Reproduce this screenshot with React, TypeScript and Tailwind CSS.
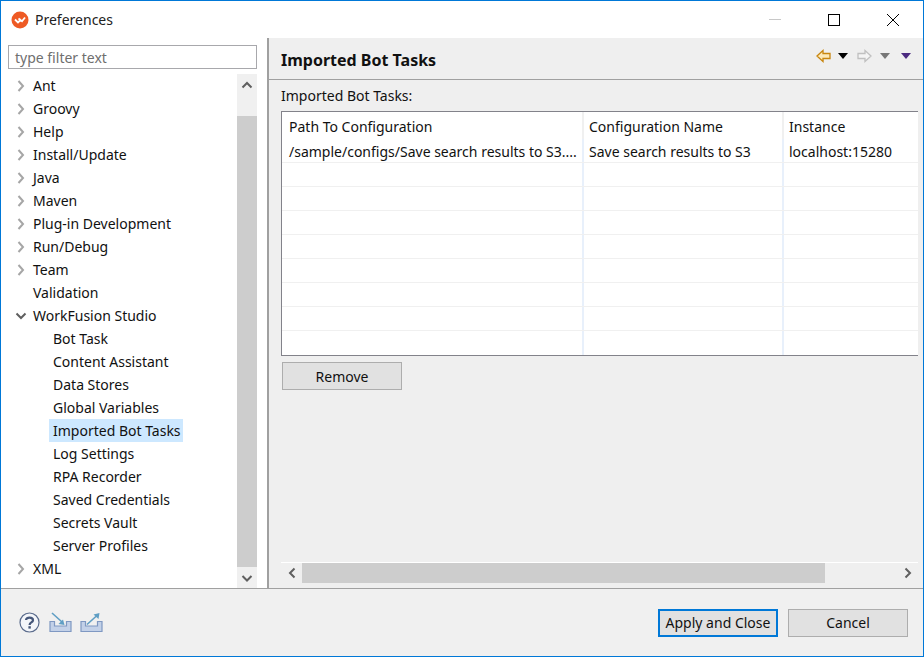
import React from "react";

const font = { fontFamily: '"Noto Sans", "Open Sans", sans-serif' };

function Chevron({ open }: { open?: boolean }) {
  return (
    <svg width="12" height="12" viewBox="0 0 12 12" className="shrink-0">
      <path d={open ? "M1.5 3.5 L6 8 L10.5 3.5" : "M3.5 1 L8 6 L3.5 11"} fill="none" stroke={open ? "#5f5f5f" : "#a6a6a6"} strokeWidth="2" />
    </svg>
  );
}

const top = [
  ["Ant", 1], ["Groovy", 1], ["Help", 1], ["Install/Update", 1], ["Java", 1], ["Maven", 1],
  ["Plug-in Development", 1], ["Run/Debug", 1], ["Team", 1], ["Validation", 0],
] as const;
const kids = ["Bot Task", "Content Assistant", "Data Stores", "Global Variables", "Imported Bot Tasks", "Log Settings", "RPA Recorder", "Saved Credentials", "Secrets Vault", "Server Profiles"];

function Row({ label, arrow, open }: { label: string; arrow?: boolean; open?: boolean }) {
  return (
    <div className="flex h-[23px] items-center pl-[14px]">
      <div className="w-[18px]">{arrow ? <Chevron open={open} /> : null}</div>
      <span className="text-[14px] text-[#111]">{label}</span>
    </div>
  );
}

function ArrowLeft({ color, fill }: { color: string; fill: string }) {
  return (
    <svg width="15" height="14" viewBox="0 0 15 14">
      <path d="M1 7 L7 1.5 V4.5 H14 V9.5 H7 V12.5 Z" fill={fill} stroke={color} strokeWidth="1.3" />
    </svg>
  );
}
function ArrowRight({ color, fill }: { color: string; fill: string }) {
  return (
    <svg width="15" height="14" viewBox="0 0 15 14">
      <path d="M14 7 L8 1.5 V4.5 H1 V9.5 H8 V12.5 Z" fill={fill} stroke={color} strokeWidth="1.3" />
    </svg>
  );
}
function Tri({ color }: { color: string }) {
  return (
    <svg width="10" height="6" viewBox="0 0 10 6"><path d="M0 0 H10 L5 6 Z" fill={color} /></svg>
  );
}

const rowsData = [
  ["/sample/configs/Save search results to S3....", "Save search results to S3", "localhost:15280"],
  ["", "", ""], ["", "", ""], ["", "", ""], ["", "", ""], ["", "", ""], ["", "", ""], ["", "", ""], ["", "", ""],
];

const tray = "M1 9.5 H5.5 V14 H17.5 V9.5 H22 V19.5 H1 Z";

export default function App() {
  return (
    <div style={font} className="flex h-[657px] w-[924px] flex-col border border-[#0078d7] bg-white text-[14px] text-[#111]">
      {/* title bar */}
      <div className="flex h-[37px] shrink-0 items-center pl-[10px]">
        <svg width="18" height="18" viewBox="0 0 18 18">
          <circle cx="9" cy="9" r="8.5" fill="#ee5a24" />
          <path d="M4 8.5 L7 11.5 L9.5 9 L11 10.2 L14 6.5 M7.5 7.5 L9.5 9" fill="none" stroke="#fff" strokeWidth="1.8" />
        </svg>
        <span className="ml-[6px] text-[14px] text-[#222]">Preferences</span>
        <div className="ml-auto flex items-center pr-px">
          <div className="flex w-[58px] justify-center"><div className="h-px w-[12px] bg-[#c8c8c8]" /></div>
          <div className="flex w-[60px] justify-center"><div className="h-[12px] w-[12px] border border-black" /></div>
          <div className="flex w-[58px] justify-center">
            <svg width="14" height="14" viewBox="0 0 14 14"><path d="M1 1 L13 13 M13 1 L1 13" stroke="#000" strokeWidth="1" /></svg>
          </div>
        </div>
      </div>

      {/* body */}
      <div className="flex min-h-0 flex-1">
        {/* left */}
        <div className="flex w-[266px] shrink-0 flex-col pl-[7px] pr-[10px] pt-[7px]">
          <div className="flex h-[24px] shrink-0 items-center border border-[#a8a8ac] pl-[6px] text-[14px] text-[#6f6f6f]">type filter text</div>
          <div className="mt-[5px] flex min-h-0 flex-1">
            <div className="min-w-0 flex-1 -ml-[7px]">
              {top.map(([l, a]) => <Row key={l} label={l} arrow={!!a} />)}
              <Row label="WorkFusion Studio" arrow open />
              {kids.map((k) => (
                <div key={k} className="flex h-[23px] items-center pl-[48px]">
                  {k === "Imported Bot Tasks" ? (
                    <span className="flex h-[23px] w-[134px] items-center bg-[#cde8ff] pl-[4px] whitespace-nowrap">{k}</span>
                  ) : (
                    <span className="flex h-[23px] items-center pl-[4px]">{k}</span>
                  )}
                </div>
              ))}
              <Row label="XML" arrow />
            </div>
            <div className="flex w-[20px] shrink-0 flex-col bg-[#f0f0f0]">
              <div className="flex h-[42px] shrink-0 justify-center pt-[6px]">
                <svg width="12" height="10" viewBox="0 0 12 10"><path d="M1.5 7.5 L6 3 L10.5 7.5" fill="none" stroke="#5f5f5f" strokeWidth="2" /></svg>
              </div>
              <div className="flex-1 bg-[#cdcdcd]" />
              <div className="flex h-[21px] shrink-0 justify-center pt-[7px]">
                <svg width="12" height="10" viewBox="0 0 12 10"><path d="M1.5 2 L6 6.5 L10.5 2" fill="none" stroke="#5f5f5f" strokeWidth="2" /></svg>
              </div>
            </div>
          </div>
        </div>
        <div className="w-[2px] shrink-0 bg-[#a0a0a0]" />

        {/* right */}
        <div className="flex min-w-0 flex-1 flex-col bg-[#efefef]">
          <div className="flex h-[42px] shrink-0 items-center border-b border-[#a0a0a0] px-[12px]">
            <span className="pt-[2px] text-[16px] font-bold text-[#111]">Imported Bot Tasks</span>
            <div className="ml-auto mb-[6px] flex items-center">
              <ArrowLeft color="#c8860f" fill="#fde9b8" />
              <div className="ml-[7px]"><Tri color="#000" /></div>
              <div className="ml-[9px]"><ArrowRight color="#c0c0c0" fill="#f4f4f4" /></div>
              <div className="ml-[8px]"><Tri color="#777" /></div>
              <div className="ml-[11px]"><Tri color="#4b2a80" /></div>
            </div>
          </div>
          <div className="flex min-h-0 flex-1 flex-col pl-[12px] pr-[5px]">
            <div className="flex h-[31px] shrink-0 items-center">Imported Bot Tasks:</div>
            <div className="h-[245px] shrink-0 border-y border-l border-[#82828a] bg-white">
              <div className="flex h-[27px] items-center">
                <div className="flex h-full w-[302px] items-center border-r-2 border-[#f0f0f0] pl-[7px] pt-[1px]">Path To Configuration</div>
                <div className="flex h-full w-[200px] items-center border-r-2 border-[#f0f0f0] pl-[5px] pt-[1px]">Configuration Name</div>
                <div className="flex h-full items-center pl-[5px] pt-[1px]">Instance</div>
              </div>
              {rowsData.map((r, i) => (
                <div key={i} className="flex h-[24px] border-b border-[#f0f0f0] last:border-b-0">
                  <div className="flex w-[302px] items-center border-r-2 border-[#e8f0fb] pl-[7px] pt-[2px] whitespace-nowrap">{r[0]}</div>
                  <div className="flex w-[200px] items-center border-r-2 border-[#e8f0fb] pl-[5px] pt-[2px] whitespace-nowrap">{r[1]}</div>
                  <div className="flex items-center pl-[5px] pt-[2px] whitespace-nowrap">{r[2]}</div>
                </div>
              ))}
            </div>
            <button className="ml-px mt-[6px] h-[28px] w-[120px] shrink-0 border border-[#adadad] bg-[#e1e1e1] text-[14px] text-[#111]">Remove</button>
            <div className="flex-1" />
            <div className="mb-[5px] flex h-[21px] shrink-0 items-stretch border-t border-white">
              <div className="flex w-[21px] items-center justify-center">
                <svg width="10" height="12" viewBox="0 0 10 12"><path d="M7.5 1.5 L3 6 L7.5 10.5" fill="none" stroke="#5f5f5f" strokeWidth="2" /></svg>
              </div>
              <div className="w-[523px] bg-[#cdcdcd]" />
              <div className="flex flex-1 items-center justify-end pr-[5px]">
                <svg width="10" height="12" viewBox="0 0 10 12"><path d="M2.5 1.5 L7 6 L2.5 10.5" fill="none" stroke="#5f5f5f" strokeWidth="2" /></svg>
              </div>
            </div>
          </div>
        </div>
      </div>

      {/* footer */}
      <div className="flex h-[68px] shrink-0 items-center border-t border-[#a0a0a0] bg-[#f0f0f0] pl-[18px] pr-[15px]">
        <svg width="21" height="21" viewBox="0 0 21 21">
          <circle cx="10.5" cy="10.5" r="9.5" fill="#f4f6fa" stroke="#5a6b8c" strokeWidth="1.2" />
          <path d="M7 8 C7 4.8 14 4.8 14 8.2 C14 10.6 10.6 10.3 10.6 13" fill="none" stroke="#46577a" strokeWidth="2.2" />
          <rect x="9.4" y="14.2" width="2.4" height="2.4" fill="#46577a" />
        </svg>
        <svg className="ml-[9px]" width="23" height="21" viewBox="0 0 23 21">
          <path d={tray} fill="#c3d1e8" stroke="#7f98c2" strokeWidth="1.2" />
          <path d="M3 1 L13 10" stroke="#5f9ec4" strokeWidth="1.6" />
          <path d="M15.5 13 L9.5 12 L14 7.5 Z" fill="#5f9ec4" />
        </svg>
        <svg className="ml-[8px]" width="23" height="21" viewBox="0 0 23 21">
          <path d={tray} fill="#c3d1e8" stroke="#7f98c2" strokeWidth="1.2" />
          <path d="M7 12.5 L17 3.5" stroke="#5f9ec4" strokeWidth="1.6" />
          <path d="M19.5 1 L18.5 7 L13.5 2.5 Z" fill="#5f9ec4" />
        </svg>
        <button className="ml-auto h-[28px] w-[120px] border-2 border-[#0078d7] bg-[#e1e1e1] text-[14px] text-[#111]">Apply and Close</button>
        <button className="ml-[10px] h-[28px] w-[120px] border border-[#adadad] bg-[#e1e1e1] text-[14px] text-[#111]">Cancel</button>
      </div>
    </div>
  );
}
